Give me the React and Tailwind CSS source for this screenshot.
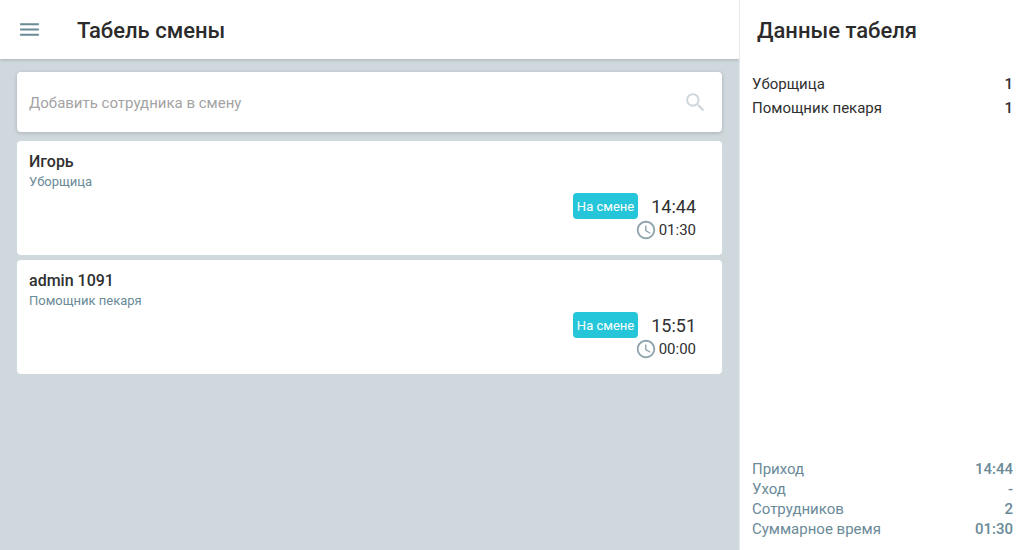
import { MdMenu, MdSearch, MdAccessTime } from "react-icons/md";

const employees = [
  { name: "Игорь", role: "Уборщица", status: "На смене", start: "14:44", worked: "01:30" },
  { name: "admin 1091", role: "Помощник пекаря", status: "На смене", start: "15:51", worked: "00:00" },
];

const roles = [
  { label: "Уборщица", value: "1" },
  { label: "Помощник пекаря", value: "1" },
];

const totals = [
  { label: "Приход", value: "14:44" },
  { label: "Уход", value: "-" },
  { label: "Сотрудников", value: "2" },
  { label: "Суммарное время", value: "01:30" },
];

function EmployeeCard({ employee }) {
  return (
    <li className="rounded bg-white pt-[10px] pr-[26px] pb-[14px] pl-3">
      <h2 className="text-[16px] leading-[22px] font-medium text-[#303030]">{employee.name}</h2>
      <p className="text-[13px] leading-[18px] text-[#6a8a98]">{employee.role}</p>
      <div className="mt-[2px] flex items-center justify-end gap-[13px]">
        <span className="rounded bg-[#26c6da] px-1 pt-px text-[13px] leading-[25px] text-white">
          {employee.status}
        </span>
        <span className="pt-px text-[18px] leading-[25px] text-[#303030]">{employee.start}</span>
      </div>
      <div className="flex items-center justify-end gap-[2px]">
        <MdAccessTime className="size-[22px] text-[#90a4ae]" />
        <span className="text-[15px] leading-5 text-[#303030]">{employee.worked}</span>
      </div>
    </li>
  );
}

export default function App() {
  return (
    <div className="flex min-h-screen bg-[#cfd8dd] font-[Roboto,sans-serif]">
      <main className="min-w-0 flex-1">
        <header className="flex h-[59px] items-center gap-[35px] bg-white pl-[17px] shadow-[0_1px_3px_rgba(0,0,0,0.18)]">
          <button type="button" aria-label="Меню">
            <MdMenu className="size-[25px] text-[#6a8a98]" />
          </button>
          <h1 className="pt-[3px] text-[22px] leading-7 font-medium text-[#2b2b2b]">Табель смены</h1>
        </header>

        <div className="px-[17px] pt-[13px]">
          <div className="flex h-[60px] items-center rounded bg-white pr-[14px] pl-3 shadow-[0_1px_4px_rgba(0,0,0,0.18)]">
            <input
              type="text"
              aria-label="Добавить сотрудника в смену"
              placeholder="Добавить сотрудника в смену"
              className="min-w-0 flex-1 pt-[2px] text-[15px] leading-5 outline-none placeholder:text-[#a3a3a3]"
            />
            <button type="button" aria-label="Поиск">
              <MdSearch className="size-[25px] text-[#cfd8dc]" />
            </button>
          </div>

          <ul className="mt-[9px] flex flex-col gap-[5px]">
            {employees.map((employee) => (
              <EmployeeCard key={employee.name} employee={employee} />
            ))}
          </ul>
        </div>
      </main>

      <aside className="flex w-[285px] shrink-0 flex-col border-l border-[#e4e9eb] bg-white pr-[11px] pb-[11px] pl-3">
        <h2 className="flex h-[59px] items-center pt-[3px] pl-[5px] text-[22px] leading-7 font-medium text-[#2b2b2b]">
          Данные табеля
        </h2>
        <dl className="mt-[13px] text-[15px] leading-6 text-[#303030]">
          {roles.map((row) => (
            <div key={row.label} className="flex justify-between">
              <dt>{row.label}</dt>
              <dd className="font-medium">{row.value}</dd>
            </div>
          ))}
        </dl>
        <dl className="mt-auto text-[15px] leading-5 text-[#6a8a98]">
          {totals.map((row) => (
            <div key={row.label} className="flex justify-between">
              <dt>{row.label}</dt>
              <dd className="font-medium">{row.value}</dd>
            </div>
          ))}
        </dl>
      </aside>
    </div>
  );
}
